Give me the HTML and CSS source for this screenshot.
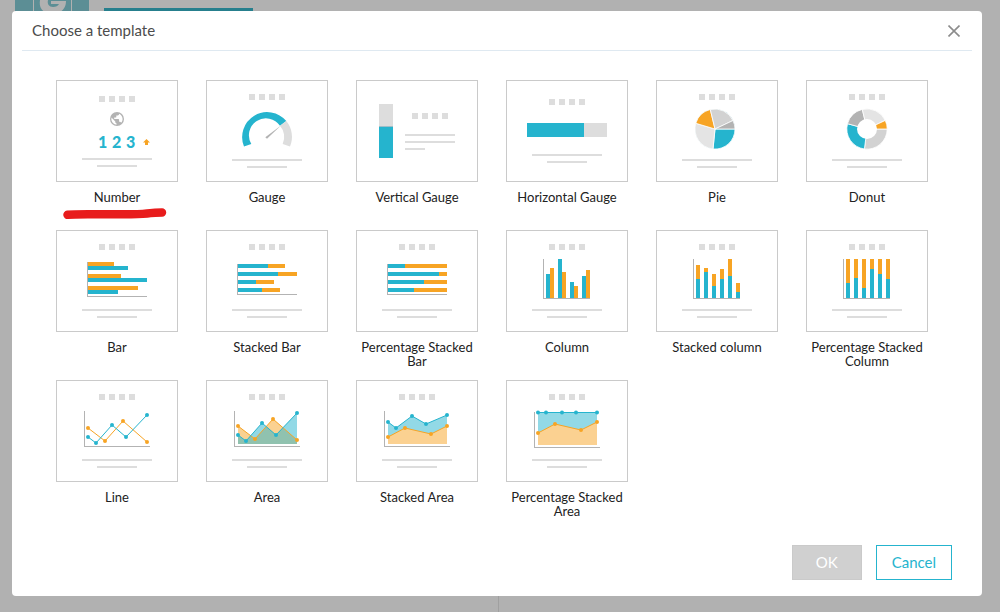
FILE: index.html
```html
<!DOCTYPE html>
<html lang="en">
<head>
    <meta charset="UTF-8">
    <meta name="viewport" content="width=device-width, initial-scale=1.0">
    <title>Choose a template</title>
    <link rel="stylesheet" href="styles.css">
</head>
<body>
    <!-- Shared thumbnail parts -->
    <svg class="sprite" width="0" height="0" aria-hidden="true">
        <defs>
            <g id="dots" fill="#dddddd">
                <rect x="42" width="6" height="6"/>
                <rect x="52" width="6" height="6"/>
                <rect x="62" width="6" height="6"/>
                <rect x="72" width="6" height="6"/>
            </g>
            <g id="lines" fill="#dddddd">
                <rect x="25" width="70" height="2"/>
                <rect x="40" y="7" width="40" height="2"/>
            </g>
        </defs>
    </svg>

    <div class="page">
        <div class="page-header">
            <svg class="logo" width="74" height="24" viewBox="0 0 74 24" aria-hidden="true">
                <path fill="#5c8e95" d="M0 0h74v24H0z"/>
                <path fill="#b1b1b1" d="M18 0h1v24h-1zM56 0h1v24h-1z"/>
                <path fill="#b1b1b1" d="M25 0h8c-1 4 1 7 5 7 3 0 5-1 6-3h-8V1h15c0 6-3 10-8 12H32c-6-2-8-7-7-13z"/>
            </svg>
            <div class="tab"></div>
        </div>
        <div class="page-body">
            <div class="pane"></div>
            <div class="pane"></div>
        </div>
    </div>

    <div class="overlay">
        <div class="modal" role="dialog" aria-labelledby="modal-title">
            <div class="modal-header">
                <h1 class="modal-title" id="modal-title">Choose a template</h1>
                <button class="close" type="button" aria-label="Close">
                    <svg width="12" height="12" viewBox="0 0 12 12"><path d="M.5.5l11 11M11.5.5l-11 11" stroke="#8c8c8c" stroke-width="1.6"/></svg>
                </button>
            </div>

            <div class="templates">
                <button class="template" type="button">
                    <svg class="thumb" viewBox="0 0 120 100">
                        <use href="#dots" y="15"/>
                        <circle cx="60" cy="38" r="7" fill="#b3b3b3"/>
                        <path fill="#fff" d="M54.5 36.6l3.8 3.8v1l1.2 1.2v1.1a5.6 5.6 0 0 1-5-7.1zM61.8 32.7a5.6 5.6 0 0 1 2.3 9.1c-.2-.6-.7-1-1.3-1h-.7v-2.1c0-.4-.3-.7-.7-.7h-4.2v-1.4h1.4c.4 0 .7-.3.7-.7v-1.4h1.4c.8 0 1.4-.6 1.4-1.4z"/>
                        <text class="digits" y="67"><tspan x="41">1</tspan><tspan x="55">2</tspan><tspan x="69">3</tspan></text>
                        <path fill="#f7a424" d="M89.500 58l3.500 3.500h-2V64h-3v-2.500h-2z"/>
                        <use href="#lines" y="77"/>
                    </svg>
                    <span class="name">Number</span>
                    <svg class="marker" width="104" height="14" viewBox="0 0 104 14" aria-hidden="true"><path d="M4.500 7.800C15 6.500 42 7.800 68 7.200S82 5.600 99 5.500" fill="none" stroke="#e81c1c" stroke-width="8.500" stroke-linecap="round"/></svg>
                </button>

                <button class="template" type="button">
                    <svg class="thumb" viewBox="0 0 120 100">
                        <use href="#dots" y="13"/>
                        <path fill="#25b4ce" d="M37 65.500A25 25 0 0 1 79.300 40L73 44.800A17 17 0 0 0 44.300 63z"/>
                        <path fill="#dddddd" d="M79.300 40A25 25 0 0 1 83 65.500L75.700 63A17 17 0 0 0 73 44.800z"/>
                        <path fill="#b3b3b3" d="M58.300 56.300L74 44.500 60 57.700z"/>
                        <use href="#lines" y="78"/>
                    </svg>
                    <span class="name">Gauge</span>
                </button>

                <button class="template" type="button">
                    <svg class="thumb" viewBox="0 0 120 100">
                        <path fill="#dddddd" d="M22 23h14v22H22z"/>
                        <path fill="#9ebec8" d="M22 45h14v1H22z"/>
                        <path fill="#25b4ce" d="M22 46h14v31H22z"/>
                        <use href="#dots" x="13" y="32"/>
                        <path fill="#dddddd" d="M48 53h50v2H48zM48 60h50v2H48zM48 67h20v2H48z"/>
                    </svg>
                    <span class="name">Vertical Gauge</span>
                </button>

                <button class="template" type="button">
                    <svg class="thumb" viewBox="0 0 120 100">
                        <use href="#dots" y="18"/>
                        <path fill="#25b4ce" d="M20 42h57v14H20z"/>
                        <path fill="#dddddd" d="M77 42h23v14H77z"/>
                        <use href="#lines" y="73"/>
                    </svg>
                    <span class="name">Horizontal Gauge</span>
                </button>

                <button class="template" type="button">
                    <svg class="thumb" viewBox="0 0 120 100">
                        <use href="#dots" y="13"/>
                        <circle cx="58" cy="48" r="20" fill="#a4dbe6"/>
                        <g stroke="#fff" stroke-width=".8">
                            <path fill="#25b4ce" d="M58 48h20A20 20 0 0 1 56 68z"/>
                            <path fill="#e4e4e4" d="M58 48L56 68A20 20 0 0 1 38.800 42.300z"/>
                            <path fill="#f7a424" d="M58 48L38.800 42.300A20 20 0 0 1 53.300 28.500z"/>
                            <path fill="#d2d2d2" d="M58 48L53.300 28.500A20 20 0 0 1 76 39.500z"/>
                            <path fill="#b3b3b3" d="M58 48L76 39.500A20 20 0 0 1 78 48z"/>
                        </g>
                        <use href="#lines" y="78"/>
                    </svg>
                    <span class="name">Pie</span>
                </button>

                <button class="template" type="button">
                    <svg class="thumb" viewBox="0 0 120 100">
                        <use href="#dots" y="13"/>
                        <g stroke="#fff" stroke-width=".8">
                            <path fill="#d2d2d2" d="M60 48h20.200A20.200 20.200 0 0 1 57.400 68z"/>
                            <path fill="#25b4ce" d="M60 48L57.400 68A20.200 20.200 0 0 1 40.500 42.700z"/>
                            <path fill="#b3b3b3" d="M60 48L40.500 42.700A20.200 20.200 0 0 1 55.300 28.400z"/>
                            <path fill="#e4e4e4" d="M60 48L55.300 28.400A20.200 20.200 0 0 1 78.300 39.400z"/>
                            <path fill="#f7a424" d="M60 48L78.300 39.400A20.200 20.200 0 0 1 80.200 48z"/>
                        </g>
                        <circle cx="60" cy="48" r="10" fill="#fff"/>
                        <use href="#lines" y="78"/>
                    </svg>
                    <span class="name">Donut</span>
                </button>

                <button class="template" type="button">
                    <svg class="thumb" viewBox="0 0 120 100">
                        <use href="#dots" y="13"/>
                        <path fill="#b3b3b3" d="M30 31h1v34h59v1H30z"/>
                        <path fill="#f7a424" d="M31 31h26v4H31zM31 43h33v4H31zM31 55h50v4H31z"/>
                        <path fill="#25b4ce" d="M31 35h40v4H31zM31 47h59v4H31zM31 59h30v4H31z"/>
                        <use href="#lines" y="78"/>
                    </svg>
                    <span class="name">Bar</span>
                </button>

                <button class="template" type="button">
                    <svg class="thumb" viewBox="0 0 120 100">
                        <use href="#dots" y="13"/>
                        <path fill="#b3b3b3" d="M30 33h1v30h59v1H30z"/>
                        <path fill="#f7a424" d="M31 33h47v4H31zM31 41h59v4H31zM31 49h36v4H31zM31 57h42v4H31z"/>
                        <path fill="#25b4ce" d="M31 33h30v4H31zM31 41h40v4H31zM31 49h18v4H31zM31 57h24v4H31z"/>
                        <use href="#lines" y="78"/>
                    </svg>
                    <span class="name">Stacked Bar</span>
                </button>

                <button class="template" type="button">
                    <svg class="thumb" viewBox="0 0 120 100">
                        <use href="#dots" y="13"/>
                        <path fill="#b3b3b3" d="M30 33h1v30h59v1H30z"/>
                        <path fill="#f7a424" d="M31 33h59v4H31zM31 41h59v4H31zM31 49h59v4H31zM31 57h59v4H31z"/>
                        <path fill="#25b4ce" d="M31 33h17v4H31zM31 41h51v4H31zM31 49h36v4H31zM31 57h26v4H31z"/>
                        <use href="#lines" y="78"/>
                    </svg>
                    <span class="name">Percentage Stacked Bar</span>
                </button>

                <button class="template" type="button">
                    <svg class="thumb" viewBox="0 0 120 100">
                        <use href="#dots" y="13"/>
                        <path fill="#b3b3b3" d="M36 28h1v39h46v1H36z"/>
                        <path fill="#25b4ce" d="M39 43h4v24h-4zM51 28h4v39h-4zM63 51h4v16h-4zM75 45h4v22h-4z"/>
                        <path fill="#f7a424" d="M43 37h4v30h-4zM55 41h4v26h-4zM67 55h4v12h-4zM79 39h4v28h-4z"/>
                        <use href="#lines" y="78"/>
                    </svg>
                    <span class="name">Column</span>
                </button>

                <button class="template" type="button">
                    <svg class="thumb" viewBox="0 0 120 100">
                        <use href="#dots" y="13"/>
                        <path fill="#b3b3b3" d="M36 28h1v39h46v1H36z"/>
                        <path fill="#f7a424" d="M39 34h4v33h-4zM47 37h4v30h-4zM55 43h4v24h-4zM63 38h4v29h-4zM71 28h4v39h-4zM79 52h4v15h-4z"/>
                        <path fill="#25b4ce" d="M39 48h4v19h-4zM47 41h4v26h-4zM55 55h4v12h-4zM63 48h4v19h-4zM71 45h4v22h-4zM79 61h4v6h-4z"/>
                        <use href="#lines" y="78"/>
                    </svg>
                    <span class="name">Stacked column</span>
                </button>

                <button class="template" type="button">
                    <svg class="thumb" viewBox="0 0 120 100">
                        <use href="#dots" y="13"/>
                        <path fill="#b3b3b3" d="M36 28h1v39h46v1H36z"/>
                        <path fill="#f7a424" d="M39 28h4v39h-4zM47 28h4v39h-4zM55 28h4v39h-4zM63 28h4v39h-4zM71 28h4v39h-4zM79 28h4v39h-4z"/>
                        <path fill="#25b4ce" d="M39 52h4v15h-4zM47 47h4v20h-4zM55 57h4v10h-4zM63 38h4v29h-4zM71 43h4v24h-4zM79 48h4v19h-4z"/>
                        <use href="#lines" y="78"/>
                    </svg>
                    <span class="name">Percentage Stacked Column</span>
                </button>

                <button class="template" type="button">
                    <svg class="thumb" viewBox="0 0 120 100">
                        <use href="#dots" y="13"/>
                        <path fill="#b3b3b3" d="M27 30h1v35h65v1H27z"/>
                        <path class="line orange" d="M31 47l17 13 18-20 24 21"/>
                        <path class="points orange" d="M31 47h0M48 60h0M66 40h0M90 61h0"/>
                        <path class="line teal" d="M31 56l8 6 16-18 14 12 21-22"/>
                        <path class="points teal" d="M31 56h0M39 62h0M55 44h0M69 56h0M90 34h0"/>
                        <use href="#lines" y="78"/>
                    </svg>
                    <span class="name">Line</span>
                </button>

                <button class="template" type="button">
                    <svg class="thumb" viewBox="0 0 120 100">
                        <use href="#dots" y="13"/>
                        <path fill="#b3b3b3" d="M27 30h1v35h65v1H27z"/>
                        <path fill="#f7a424" opacity=".5" d="M31 45l17 13 18-20 24 21v4H31z"/>
                        <path fill="#25b4ce" opacity=".5" d="M31 54l8 6 16-18 14 12 21-22v31H31z"/>
                        <path class="line orange" d="M31 45l17 13 18-20 24 21"/>
                        <path class="points orange" d="M31 45h0M48 58h0M66 38h0M90 59h0"/>
                        <path class="line teal" d="M31 54l8 6 16-18 14 12 21-22"/>
                        <path class="points teal" d="M31 54h0M39 60h0M55 42h0M69 54h0M90 32h0"/>
                        <use href="#lines" y="78"/>
                    </svg>
                    <span class="name">Area</span>
                </button>

                <button class="template" type="button">
                    <svg class="thumb" viewBox="0 0 120 100">
                        <use href="#dots" y="13"/>
                        <path fill="#b3b3b3" d="M27 30h1v35h65v1H27z"/>
                        <path fill="#92d9e6" d="M31 41l8 6 16-12 14 8 21-9v29H31z"/>
                        <path fill="#fbd191" d="M31 56l17-9 26 6 16-8v18H31z"/>
                        <path class="line teal" d="M31 41l8 6 16-12 14 8 21-9"/>
                        <path class="points teal" d="M31 41h0M39 47h0M55 35h0M69 43h0M90 34h0"/>
                        <path class="line orange" d="M31 56l17-9 26 6 16-8"/>
                        <path class="points orange" d="M31 56h0M48 47h0M74 53h0M90 45h0"/>
                        <use href="#lines" y="78"/>
                    </svg>
                    <span class="name">Stacked Area</span>
                </button>

                <button class="template" type="button">
                    <svg class="thumb" viewBox="0 0 120 100">
                        <use href="#dots" y="13"/>
                        <path fill="#b3b3b3" d="M27 31h1v35h65v1H27z"/>
                        <path fill="#92d9e6" d="M31 31.500h59V64H31z"/>
                        <path fill="#fbd191" d="M31 52l17-9 26 6 16-8v23H31z"/>
                        <path class="line teal" d="M31 31.500h59"/>
                        <path class="points teal" d="M31 31.500h0M39 31.500h0M55 31.500h0M69 31.500h0M90 31.500h0"/>
                        <path class="line orange" d="M31 52l17-9 26 6 16-8"/>
                        <path class="points orange" d="M31 52h0M48 43h0M74 49h0M90 41h0"/>
                        <use href="#lines" y="78"/>
                    </svg>
                    <span class="name">Percentage Stacked Area</span>
                </button>
            </div>

            <div class="modal-footer">
                <button class="btn btn-ok" type="button" disabled>OK</button>
                <button class="btn btn-cancel" type="button">Cancel</button>
            </div>
        </div>
    </div>
</body>
</html>
```

FILE: styles.css
```css
* {
    box-sizing: border-box;
}

body {
    margin: 0;
    font-family: Lato, "Liberation Sans", sans-serif;
    background-color: #b1b1b1;
    color: #222;
}

button {
    font-family: inherit;
    cursor: pointer;
}

.sprite {
    position: absolute;
}

/* Page behind the dialog */
.page {
    display: flex;
    flex-direction: column;
    height: 100vh;
    overflow: hidden;
}

.page-header {
    display: flex;
    gap: 15px;
    padding-left: 15px;
}

.logo {
    display: block;
}

.tab {
    width: 149px;
    height: 12px;
    border-bottom: 4px solid #267f8d;
}

.page-body {
    display: flex;
    gap: 4px;
    flex: 1;
}

.pane {
    flex: 1;
}

.pane:first-child {
    border-right: 1px solid #a0a0a0;
}

/* Dialog */
.overlay {
    position: absolute;
    top: 0;
    left: 0;
    width: 100%;
    padding: 11px 18px 16px 12px;
}

.modal {
    background-color: #fff;
    border-radius: 4px;
}

.modal-header {
    display: flex;
    align-items: center;
    justify-content: space-between;
    height: 40px;
    margin: 0 10px;
    padding: 0 10px;
    border-bottom: 1px solid #dfe9f1;
}

.modal-title {
    margin: 0;
    padding-bottom: 2px;
    font-size: 15px;
    line-height: 20px;
    font-weight: 400;
    color: #4c4c4c;
}

.close {
    display: flex;
    padding: 2px;
    border: 0;
    background: none;
}

.templates {
    display: grid;
    grid-template-columns: repeat(auto-fill, 122px);
    gap: 12px 28px;
    padding: 29px 44px 0;
}

.template {
    position: relative;
    display: flex;
    flex-direction: column;
    gap: 8px;
    padding: 0;
    border: 0;
    background: none;
    color: #222;
    font-size: 13px;
    line-height: 14px;
    text-align: center;
}

.thumb {
    width: 100%;
    height: 102px;
    border: 1px solid #cacaca;
}

.name {
    width: 100%;
    min-height: 28px;
}

.marker {
    position: absolute;
    top: 127px;
    left: 7px;
}

.digits {
    font-size: 16px;
    font-weight: 900;
    fill: #25b4ce;
}

.line {
    fill: none;
    stroke-width: 1;
}

.points {
    fill: none;
    stroke-width: 4;
    stroke-linecap: round;
}

.teal {
    stroke: #25b4ce;
}

.orange {
    stroke: #f7a424;
}

.modal-footer {
    display: flex;
    justify-content: flex-end;
    gap: 14px;
    padding: 27px 30px 16px;
}

.btn {
    height: 35px;
    padding: 0 15px 2px;
    font-size: 15px;
    line-height: 20px;
}

.btn-ok {
    min-width: 70px;
    border: 1px solid #cacaca;
    background-color: #d0d0d0;
    color: #fff;
    cursor: default;
}

.btn-cancel {
    min-width: 76px;
    border: 1px solid #25b4ce;
    background-color: #fff;
    color: #25b4ce;
}
```
